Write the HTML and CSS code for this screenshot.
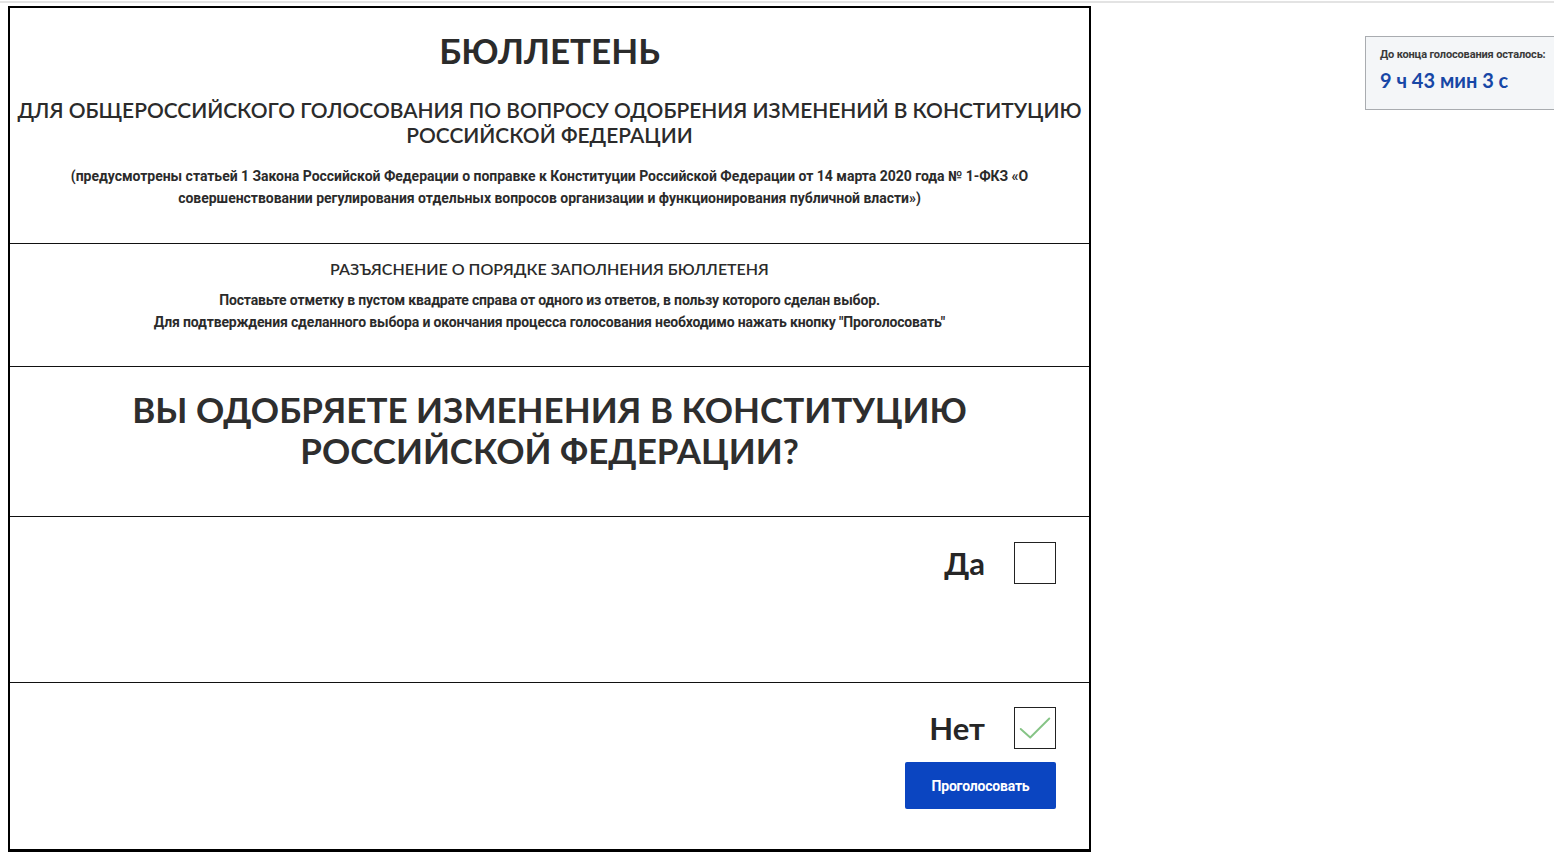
FILE: index.html
```html
<!DOCTYPE html>
<html lang="ru">
<head>
<meta charset="utf-8">
<title>Бюллетень</title>
<link rel="stylesheet" href="styles.css">
</head>
<body>
<div class="topline"></div>
<div class="page">
  <main class="ballot">
    <section class="sec sec-head">
      <h1 class="title">БЮЛЛЕТЕНЬ</h1>
      <h2 class="subtitle">ДЛЯ ОБЩЕРОССИЙСКОГО ГОЛОСОВАНИЯ ПО ВОПРОСУ ОДОБРЕНИЯ ИЗМЕНЕНИЙ В КОНСТИТУЦИЮ РОССИЙСКОЙ ФЕДЕРАЦИИ</h2>
      <p class="note">(предусмотрены статьей 1 Закона Российской Федерации о поправке к Конституции Российской Федерации от 14 марта 2020 года № 1-ФКЗ «О совершенствовании регулирования отдельных вопросов организации и функционирования публичной власти»)</p>
    </section>
    <section class="sec sec-info">
      <h3 class="info-title">РАЗЪЯСНЕНИЕ О ПОРЯДКЕ ЗАПОЛНЕНИЯ БЮЛЛЕТЕНЯ</h3>
      <p class="info-text">Поставьте отметку в пустом квадрате справа от одного из ответов, в пользу которого сделан выбор.<br>Для подтверждения сделанного выбора и окончания процесса голосования необходимо нажать кнопку "Проголосовать"</p>
    </section>
    <section class="sec sec-question">
      <h2 class="question">ВЫ ОДОБРЯЕТЕ ИЗМЕНЕНИЯ В КОНСТИТУЦИЮ РОССИЙСКОЙ ФЕДЕРАЦИИ?</h2>
    </section>
    <section class="sec option option-yes">
      <div class="opt-line">
        <span class="opt-label">Да</span>
        <span class="checkbox"></span>
      </div>
    </section>
    <section class="option option-no">
      <div class="opt-line">
        <span class="opt-label">Нет</span>
        <span class="checkbox">
          <svg class="check" viewBox="0 0 42 42" width="40" height="40"><polyline points="6,22 16,31 36,11" fill="none" stroke="#86c486" stroke-width="2" stroke-linecap="round" stroke-linejoin="round"/></svg>
        </span>
      </div>
      <button class="vote-btn" type="button">Проголосовать</button>
    </section>
  </main>
  <aside class="timer">
    <div class="timer-label">До конца голосования осталось:</div>
    <div class="timer-value">9 ч 43 мин 3 с</div>
  </aside>
</div>
</body>
</html>
```

FILE: styles.css
```css
html, body {
  margin: 0;
  padding: 0;
  background: #fff;
  overflow: hidden;
}
body {
  font-family: Lato, "Open Sans", sans-serif;
  color: #2b2b2b;
}
.topline {
  height: 2px;
  margin-top: 1px;
  background: #e3e3e3;
}
.page {
  display: flex;
  align-items: flex-start;
  padding-left: 8px;
  padding-top: 3px;
  width: 1546px;
  overflow: hidden;
}
.ballot {
  flex: none;
  width: 1079px;
  border: 2px solid #000;
  border-bottom-width: 3px;
}
.sec {
  border-bottom: 1px solid #111;
  text-align: center;
}
.sec-head {
  padding: 22px 2px 0;
  height: 213px;
}
.title {
  margin: 0;
  font-size: 35px;
  line-height: 40px;
  font-weight: 700;
}
.subtitle {
  margin: 27px 0 0;
  font-size: 20.9px;
  line-height: 25px;
  font-weight: 600;
}
.note {
  margin: 18px 30px 0;
  font-family: Roboto, "Open Sans", sans-serif;
  font-size: 14px;
  line-height: 22px;
  font-weight: 700;
  letter-spacing: -0.03px;
}
.sec-info {
  padding-top: 15px;
  height: 107px;
}
.info-title {
  margin: 0;
  font-size: 16px;
  line-height: 20px;
  font-weight: 600;
}
.info-text {
  margin: 10px 0 0;
  font-family: Roboto, "Open Sans", sans-serif;
  font-size: 14px;
  line-height: 22px;
  font-weight: 700;
  letter-spacing: -0.15px;
}
.sec-question {
  padding-top: 22px;
  height: 127px;
}
.question {
  margin: 0 90px;
  font-size: 35px;
  line-height: 41px;
  font-weight: 700;
  color: #2e2e2e;
}
.option {
  display: flex;
  flex-direction: column;
  align-items: flex-end;
  padding-right: 33px;
}
.option-yes {
  height: 140px;
  padding-top: 25px;
}
.option-no {
  padding-top: 24px;
  padding-bottom: 40px;
}
.opt-line {
  display: flex;
  align-items: center;
  gap: 29px;
}
.opt-label {
  font-size: 31px;
  font-weight: 700;
  line-height: 40px;
  color: #262626;
}
.checkbox {
  width: 40px;
  height: 40px;
  border: 1px solid #222;
  display: flex;
  align-items: center;
  justify-content: center;
}
.vote-btn {
  margin-top: 13px;
  width: 151px;
  height: 47px;
  border: 0;
  border-radius: 2px;
  background: #0b45c1;
  color: #fff;
  font-family: Roboto, "Open Sans", sans-serif;
  font-size: 14px;
  font-weight: 700;
  letter-spacing: -0.2px;
}
.timer {
  flex: none;
  margin-left: 274px;
  margin-top: 30px;
  width: 230px;
  height: 74px;
  border: 1px solid #a9acb0;
  background: #f4f6f8;
  padding-left: 14px;
  box-sizing: border-box;
}
.timer-label {
  margin-top: 10px;
  font-family: Roboto, "Open Sans", sans-serif;
  font-size: 11px;
  font-weight: 700;
  color: #3a3a3a;
  line-height: 16px;
  letter-spacing: -0.15px;
}
.timer-value {
  margin-top: 5px;
  font-size: 20px;
  font-weight: 700;
  color: #1747a6;
  line-height: 24px;
}
```
